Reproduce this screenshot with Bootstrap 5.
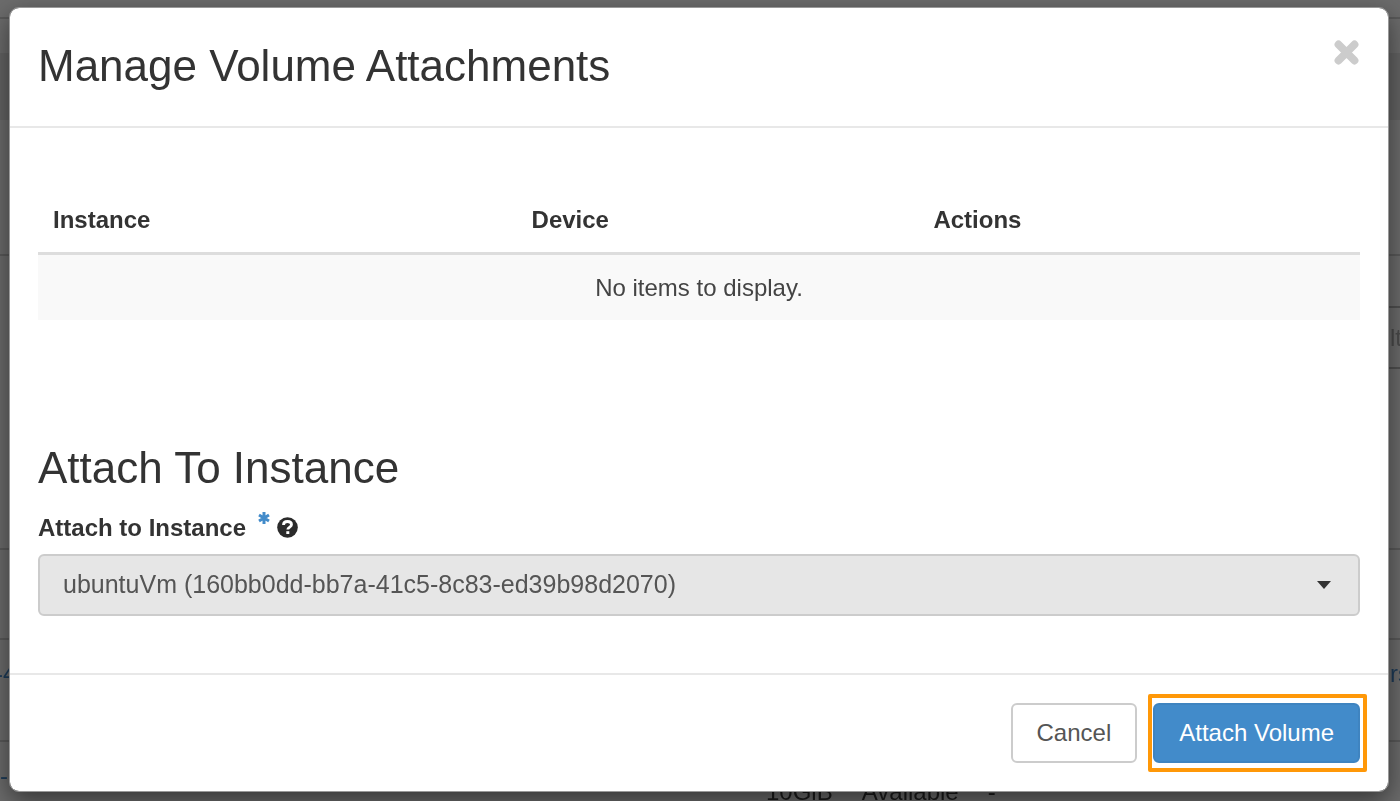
<!DOCTYPE html>
<html lang="en">
<head>
<meta charset="utf-8">
<meta name="viewport" content="width=device-width, initial-scale=1">
<title>Manage Volume Attachments</title>
<link href="https://cdn.jsdelivr.net/npm/bootstrap@5.3.0/dist/css/bootstrap.min.css" rel="stylesheet">
<style>
body { font-family: "Liberation Sans", Arial, sans-serif; font-size: 24px; line-height: 35px; color: #333; background: #6c6c6c; }

/* Dimmed page behind the dialog */
.dim-page { color: #1b1b1b; }
.dim-row { border-bottom: 2px solid #5a5a5a; flex: none; }
.dim-band { height: 67px; background: #646464; }
.dim-filter { width: 60px; padding: 12px 0 12px 30px; border: solid #505050; border-width: 2px 0; color: #4a4a4a; }
.dim-link { color: #1d3b58; text-decoration: none; }
.dim-id { margin-left: -5px; }
.dim-user { width: 10px; }
.h-top { height: 19px; } .h-gap { height: 34px; } .h-head { height: 136px; }
.h-tools { height: 294px; padding-top: 50px; } .h-cols { height: 90px; } .h-item { height: 102px; }
.dim-last { gap: 29px; padding-top: 16px; }
.dim-last span { padding-top: 16px; }
.dim-last .dim-link { width: 737px; padding: 0; }

.volume-dialog { max-width: none; margin: 7px 11px 9px 9px; }
.volume-dialog .modal-content { border: 1px solid #999; border-radius: 10px; box-shadow: 0 9px 26px rgba(0,0,0,.5); color: #333; }
.volume-dialog .modal-header { padding: 28px 28px 30px; border-bottom: 2px solid #e8e8e8; }
.volume-dialog .modal-body { padding: 59px 28px 57px; }
.volume-dialog .modal-footer { padding: 28px; gap: 16px; border-top: 2px solid #e8e8e8; }
.big-title { font-size: 44px; line-height: 60px; font-weight: 400; margin: 0; }
.close-x { width: 27px; height: 27px; padding: 0; border: 0; background: none; margin-top: 3px; }

.attach-table { --bs-table-color: #333; color: #333; margin-bottom: 118px; table-layout: fixed; }
.attach-table th, .attach-table td { padding: 15px; border: 0; }
.attach-table thead th { border-bottom: 3px solid #ddd; }
.attach-table tbody td { background: #f9f9f9; text-align: center; box-shadow: none; color: #444; }
.c-instance { width: 36.2%; } .c-device { width: 30.4%; }

.field-label { margin: 12px 0 9px; gap: 7px; }
.field-label label { padding-right: 5px; }
.req { margin: 0 0 20px; }
.instance-select { height: 62px; padding: 0 60px 0 23px; font-size: 25px; color: #555; border: 2px solid #ccc; border-radius: 6px; background-color: #e6e6e6;
  background-image: url("data:image/svg+xml,%3Csvg xmlns='http://www.w3.org/2000/svg' viewBox='0 0 14 8'%3E%3Cpath fill='%23333' d='M0 0h14L7 8z'/%3E%3C/svg%3E"); background-size: 14px 8px; background-position: right 27px center; }
.act { font-size: 24px; line-height: 34px; padding: 11px 24px; border: 2px solid #ccc; border-radius: 6px; color: #555; background: #fff; margin: 0; }
.act-main { color: #fff; background: #428bca; border-color: #3f84c0; }
.highlight { position: relative; margin: 0; }
.highlight::after { content: ""; position: absolute; inset: -9px -7px -9px -5px; border: 4px solid #ff9808; border-radius: 2px; pointer-events: none; }
</style>
</head>
<body>
<div class="dim-page position-fixed top-0 start-0 w-100 h-100 overflow-hidden d-flex flex-column" aria-hidden="true">
  <div class="dim-row h-top"></div>
  <div class="h-gap flex-shrink-0"></div>
  <div class="dim-band flex-shrink-0"></div>
  <div class="dim-row h-head"></div>
  <div class="dim-row h-tools d-flex justify-content-end align-items-start"><div class="dim-filter overflow-hidden">Filter</div></div>
  <div class="dim-row h-cols"></div>
  <div class="dim-row h-item d-flex justify-content-between align-items-start pt-3"><span class="dim-link dim-id">-4</span><span class="dim-link dim-user">rs</span></div>
  <div class="dim-last d-flex flex-shrink-0 align-items-start"><span class="dim-link flex-shrink-0">-</span><span>10GiB</span><span>Available</span><span>-</span></div>
</div>

<div class="modal d-block" role="dialog" aria-modal="true" aria-labelledby="dialogTitle">
  <div class="modal-dialog volume-dialog">
    <form class="modal-content">
      <div class="modal-header align-items-start justify-content-between">
        <h3 class="big-title" id="dialogTitle">Manage Volume Attachments</h3>
        <button type="button" class="close-x d-flex" aria-label="Close">
          <svg viewBox="0 0 27 27" width="27" height="27"><path d="M5.500 5.500 21.500 21.500M21.500 5.500 5.500 21.500" stroke="#ccc" stroke-width="7.800" stroke-linecap="round"/></svg>
        </button>
      </div>
      <div class="modal-body">
        <table class="table attach-table">
          <thead><tr><th class="c-instance" scope="col">Instance</th><th class="c-device" scope="col">Device</th><th scope="col">Actions</th></tr></thead>
          <tbody><tr><td colspan="3">No items to display.</td></tr></tbody>
        </table>
        <h3 class="big-title">Attach To Instance</h3>
        <div class="field-label d-flex align-items-center">
          <label class="fw-bold" for="instance">Attach to Instance</label>
          <svg class="req" width="12" height="14" viewBox="0 0 12 14" aria-hidden="true"><path d="M6 1v12M1 4l10 6M11 4 1 10" stroke="#428bca" stroke-width="3"/></svg>
          <svg width="21" height="21" viewBox="0 0 21 21" role="img" aria-label="Help"><circle cx="10.500" cy="10.500" r="10.300" fill="#2b2b2b"/><path d="M6.500 8C6.500 5.300 8.200 4.500 10.500 4.500S14.500 5.500 14.500 7.700C14.500 10 10.800 10.100 10.800 12.600" fill="none" stroke="#fff" stroke-width="2.800"/><path d="M9.300 14.200h3v2.800h-3z" fill="#fff"/></svg>
        </div>
        <select class="form-select instance-select" id="instance">
          <option>ubuntuVm (160bb0dd-bb7a-41c5-8c83-ed39b98d2070)</option>
        </select>
      </div>
      <div class="modal-footer">
        <button type="button" class="btn act">Cancel</button>
        <span class="highlight d-flex"><button type="submit" class="btn act act-main">Attach Volume</button></span>
      </div>
    </form>
  </div>
</div>
<script src="https://cdn.jsdelivr.net/npm/bootstrap@5.3.0/dist/js/bootstrap.bundle.min.js"></script>
</body>
</html>
